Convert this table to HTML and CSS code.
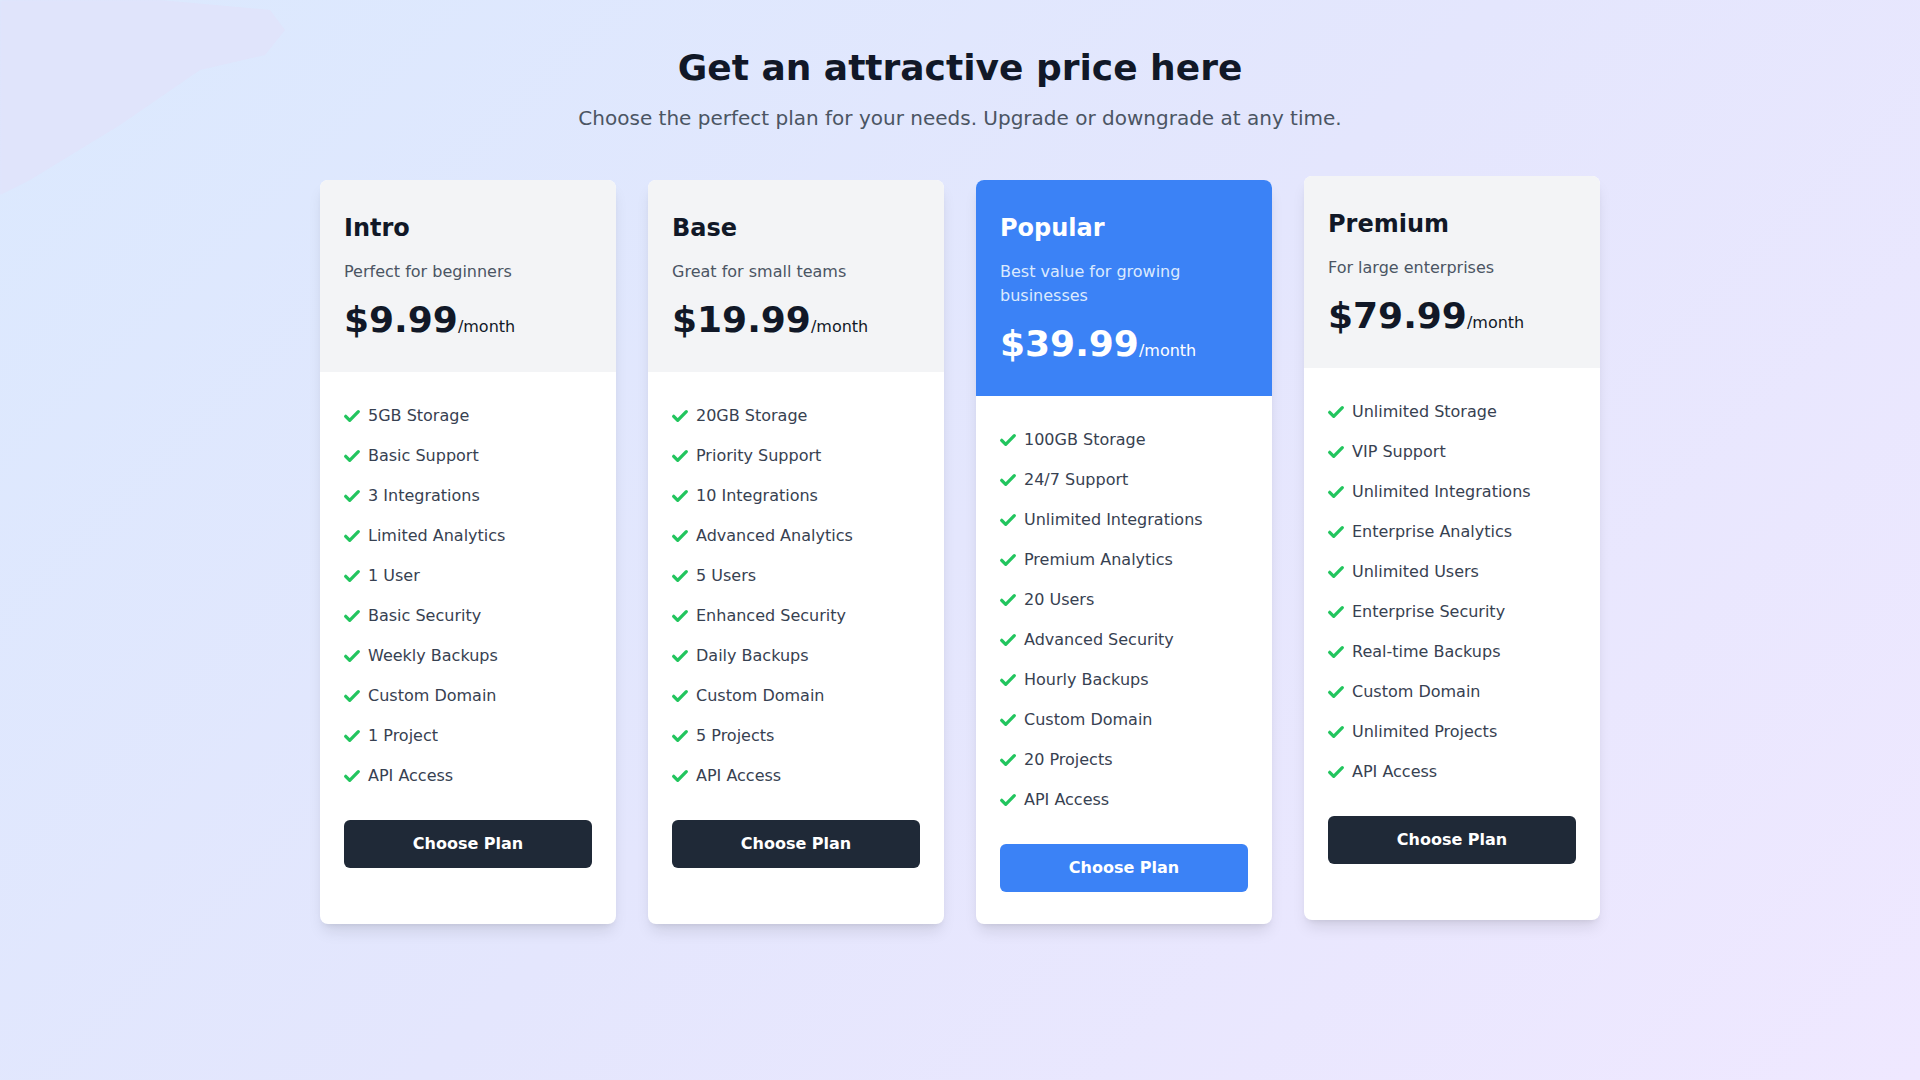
FILE: index.html
```html
<!DOCTYPE html>
<html lang="en">
<head>
<meta charset="utf-8">
<title>Pricing</title>
<link rel="stylesheet" href="styles.css">
</head>
<body>
<div class="blob"></div>
<main class="page">
  <header class="intro">
    <h1 class="title">Get an attractive price here</h1>
    <p class="subtitle">Choose the perfect plan for your needs. Upgrade or downgrade at any time.</p>
  </header>
  <section class="plans">
    <article class="card">
      <div class="card-head">
        <h2 class="plan-name">Intro</h2>
        <p class="plan-desc">Perfect for beginners</p>
        <p class="price"><span class="amount">$9.99</span><span class="per">/month</span></p>
      </div>
      <div class="card-body">
        <ul class="features">
          <li><svg class="check" viewBox="0 0 16 12"><path d="M1.7 6.3l4 4 8.6-8.6"/></svg>5GB Storage</li>
          <li><svg class="check" viewBox="0 0 16 12"><path d="M1.7 6.3l4 4 8.6-8.6"/></svg>Basic Support</li>
          <li><svg class="check" viewBox="0 0 16 12"><path d="M1.7 6.3l4 4 8.6-8.6"/></svg>3 Integrations</li>
          <li><svg class="check" viewBox="0 0 16 12"><path d="M1.7 6.3l4 4 8.6-8.6"/></svg>Limited Analytics</li>
          <li><svg class="check" viewBox="0 0 16 12"><path d="M1.7 6.3l4 4 8.6-8.6"/></svg>1 User</li>
          <li><svg class="check" viewBox="0 0 16 12"><path d="M1.7 6.3l4 4 8.6-8.6"/></svg>Basic Security</li>
          <li><svg class="check" viewBox="0 0 16 12"><path d="M1.7 6.3l4 4 8.6-8.6"/></svg>Weekly Backups</li>
          <li><svg class="check" viewBox="0 0 16 12"><path d="M1.7 6.3l4 4 8.6-8.6"/></svg>Custom Domain</li>
          <li><svg class="check" viewBox="0 0 16 12"><path d="M1.7 6.3l4 4 8.6-8.6"/></svg>1 Project</li>
          <li><svg class="check" viewBox="0 0 16 12"><path d="M1.7 6.3l4 4 8.6-8.6"/></svg>API Access</li>
        </ul>
        <button class="btn">Choose Plan</button>
      </div>
    </article>

    <article class="card">
      <div class="card-head">
        <h2 class="plan-name">Base</h2>
        <p class="plan-desc">Great for small teams</p>
        <p class="price"><span class="amount">$19.99</span><span class="per">/month</span></p>
      </div>
      <div class="card-body">
        <ul class="features">
          <li><svg class="check" viewBox="0 0 16 12"><path d="M1.7 6.3l4 4 8.6-8.6"/></svg>20GB Storage</li>
          <li><svg class="check" viewBox="0 0 16 12"><path d="M1.7 6.3l4 4 8.6-8.6"/></svg>Priority Support</li>
          <li><svg class="check" viewBox="0 0 16 12"><path d="M1.7 6.3l4 4 8.6-8.6"/></svg>10 Integrations</li>
          <li><svg class="check" viewBox="0 0 16 12"><path d="M1.7 6.3l4 4 8.6-8.6"/></svg>Advanced Analytics</li>
          <li><svg class="check" viewBox="0 0 16 12"><path d="M1.7 6.3l4 4 8.6-8.6"/></svg>5 Users</li>
          <li><svg class="check" viewBox="0 0 16 12"><path d="M1.7 6.3l4 4 8.6-8.6"/></svg>Enhanced Security</li>
          <li><svg class="check" viewBox="0 0 16 12"><path d="M1.7 6.3l4 4 8.6-8.6"/></svg>Daily Backups</li>
          <li><svg class="check" viewBox="0 0 16 12"><path d="M1.7 6.3l4 4 8.6-8.6"/></svg>Custom Domain</li>
          <li><svg class="check" viewBox="0 0 16 12"><path d="M1.7 6.3l4 4 8.6-8.6"/></svg>5 Projects</li>
          <li><svg class="check" viewBox="0 0 16 12"><path d="M1.7 6.3l4 4 8.6-8.6"/></svg>API Access</li>
        </ul>
        <button class="btn">Choose Plan</button>
      </div>
    </article>

    <article class="card card-popular">
      <div class="card-head">
        <h2 class="plan-name">Popular</h2>
        <p class="plan-desc">Best value for growing<br>businesses</p>
        <p class="price"><span class="amount">$39.99</span><span class="per">/month</span></p>
      </div>
      <div class="card-body">
        <ul class="features">
          <li><svg class="check" viewBox="0 0 16 12"><path d="M1.7 6.3l4 4 8.6-8.6"/></svg>100GB Storage</li>
          <li><svg class="check" viewBox="0 0 16 12"><path d="M1.7 6.3l4 4 8.6-8.6"/></svg>24/7 Support</li>
          <li><svg class="check" viewBox="0 0 16 12"><path d="M1.7 6.3l4 4 8.6-8.6"/></svg>Unlimited Integrations</li>
          <li><svg class="check" viewBox="0 0 16 12"><path d="M1.7 6.3l4 4 8.6-8.6"/></svg>Premium Analytics</li>
          <li><svg class="check" viewBox="0 0 16 12"><path d="M1.7 6.3l4 4 8.6-8.6"/></svg>20 Users</li>
          <li><svg class="check" viewBox="0 0 16 12"><path d="M1.7 6.3l4 4 8.6-8.6"/></svg>Advanced Security</li>
          <li><svg class="check" viewBox="0 0 16 12"><path d="M1.7 6.3l4 4 8.6-8.6"/></svg>Hourly Backups</li>
          <li><svg class="check" viewBox="0 0 16 12"><path d="M1.7 6.3l4 4 8.6-8.6"/></svg>Custom Domain</li>
          <li><svg class="check" viewBox="0 0 16 12"><path d="M1.7 6.3l4 4 8.6-8.6"/></svg>20 Projects</li>
          <li><svg class="check" viewBox="0 0 16 12"><path d="M1.7 6.3l4 4 8.6-8.6"/></svg>API Access</li>
        </ul>
        <button class="btn btn-blue">Choose Plan</button>
      </div>
    </article>

    <article class="card card-lifted">
      <div class="card-head">
        <h2 class="plan-name">Premium</h2>
        <p class="plan-desc">For large enterprises</p>
        <p class="price"><span class="amount">$79.99</span><span class="per">/month</span></p>
      </div>
      <div class="card-body">
        <ul class="features">
          <li><svg class="check" viewBox="0 0 16 12"><path d="M1.7 6.3l4 4 8.6-8.6"/></svg>Unlimited Storage</li>
          <li><svg class="check" viewBox="0 0 16 12"><path d="M1.7 6.3l4 4 8.6-8.6"/></svg>VIP Support</li>
          <li><svg class="check" viewBox="0 0 16 12"><path d="M1.7 6.3l4 4 8.6-8.6"/></svg>Unlimited Integrations</li>
          <li><svg class="check" viewBox="0 0 16 12"><path d="M1.7 6.3l4 4 8.6-8.6"/></svg>Enterprise Analytics</li>
          <li><svg class="check" viewBox="0 0 16 12"><path d="M1.7 6.3l4 4 8.6-8.6"/></svg>Unlimited Users</li>
          <li><svg class="check" viewBox="0 0 16 12"><path d="M1.7 6.3l4 4 8.6-8.6"/></svg>Enterprise Security</li>
          <li><svg class="check" viewBox="0 0 16 12"><path d="M1.7 6.3l4 4 8.6-8.6"/></svg>Real-time Backups</li>
          <li><svg class="check" viewBox="0 0 16 12"><path d="M1.7 6.3l4 4 8.6-8.6"/></svg>Custom Domain</li>
          <li><svg class="check" viewBox="0 0 16 12"><path d="M1.7 6.3l4 4 8.6-8.6"/></svg>Unlimited Projects</li>
          <li><svg class="check" viewBox="0 0 16 12"><path d="M1.7 6.3l4 4 8.6-8.6"/></svg>API Access</li>
        </ul>
        <button class="btn">Choose Plan</button>
      </div>
    </article>
  </section>
</main>
</body>
</html>
```

FILE: styles.css
```css
* { box-sizing: border-box; }

html, body {
  margin: 0;
  padding: 0;
  min-height: 100%;
}

body {
  min-height: 1080px;
  font-family: "DejaVu Sans", "Liberation Sans", sans-serif;
  background: linear-gradient(135deg, #dbe9fe 0%, #e4e6fd 50%, #efe8ff 100%);
  color: #374151;
  position: relative;
  overflow: hidden;
}

.blob {
  position: absolute;
  left: 0;
  top: 0;
  width: 290px;
  height: 200px;
  background: #e2e3fb;
  clip-path: polygon(0 0, 160px 0, 270px 10px, 285px 30px, 265px 55px, 200px 70px, 120px 125px, 30px 180px, 0 195px);
  filter: blur(1px);
  opacity: 0.8;
}

.page {
  position: relative;
  max-width: 1280px;
  margin: 0 auto;
  padding: 48px 0;
}

.intro {
  text-align: center;
  margin-bottom: 48px;
}

.title {
  margin: 0 0 16px;
  font-size: 36px;
  line-height: 40px;
  font-weight: 700;
  color: #111827;
}

.subtitle {
  margin: 0;
  font-size: 20px;
  line-height: 28px;
  color: #4b5563;
}

.plans {
  display: grid;
  grid-template-columns: repeat(4, 1fr);
  gap: 32px;
  align-items: stretch;
}

.card {
  background: #ffffff;
  border-radius: 8px;
  overflow: hidden;
  box-shadow: 0 10px 15px -3px rgba(0, 0, 0, 0.1), 0 4px 6px -4px rgba(0, 0, 0, 0.1);
  display: flex;
  flex-direction: column;
}

.card-lifted {
  transform: translateY(-4px);
}

.card-head {
  background: #f3f4f6;
  padding: 32px 24px;
}

.plan-name {
  margin: 0;
  font-size: 24px;
  line-height: 32px;
  font-weight: 700;
  color: #111827;
}

.plan-desc {
  margin: 16px 0 0;
  font-size: 16px;
  line-height: 24px;
  color: #4b5563;
}

.price {
  margin: 16px 0 0;
  font-size: 36px;
  line-height: 40px;
  height: 40px;
  color: #111827;
}

.amount {
  font-size: 36px;
  font-weight: 700;
}

.per {
  font-size: 16px;
  line-height: 1;
}

.card-popular .card-head {
  background: #3b82f6;
}

.card-popular .plan-name,
.card-popular .price {
  color: #ffffff;
}

.card-popular .plan-desc {
  color: #dbeafe;
}

.card-body {
  padding: 32px 24px;
}

.features {
  list-style: none;
  margin: 0;
  padding: 0;
  display: flex;
  flex-direction: column;
  gap: 16px;
}

.features li {
  display: flex;
  align-items: center;
  font-size: 16px;
  line-height: 24px;
  color: #374151;
}

.check {
  width: 16px;
  height: 12px;
  margin-right: 8px;
  fill: none;
  stroke: #22c55e;
  stroke-width: 3.3;
  stroke-linecap: round;
  stroke-linejoin: round;
  overflow: visible;
  flex-shrink: 0;
}

.btn {
  display: block;
  width: 100%;
  margin-top: 32px;
  padding: 12px 16px;
  border: 0;
  border-radius: 6px;
  background: #1f2937;
  color: #ffffff;
  font-family: inherit;
  font-size: 16px;
  line-height: 24px;
  font-weight: 700;
  cursor: pointer;
}

.btn-blue {
  background: #3b82f6;
}
```
